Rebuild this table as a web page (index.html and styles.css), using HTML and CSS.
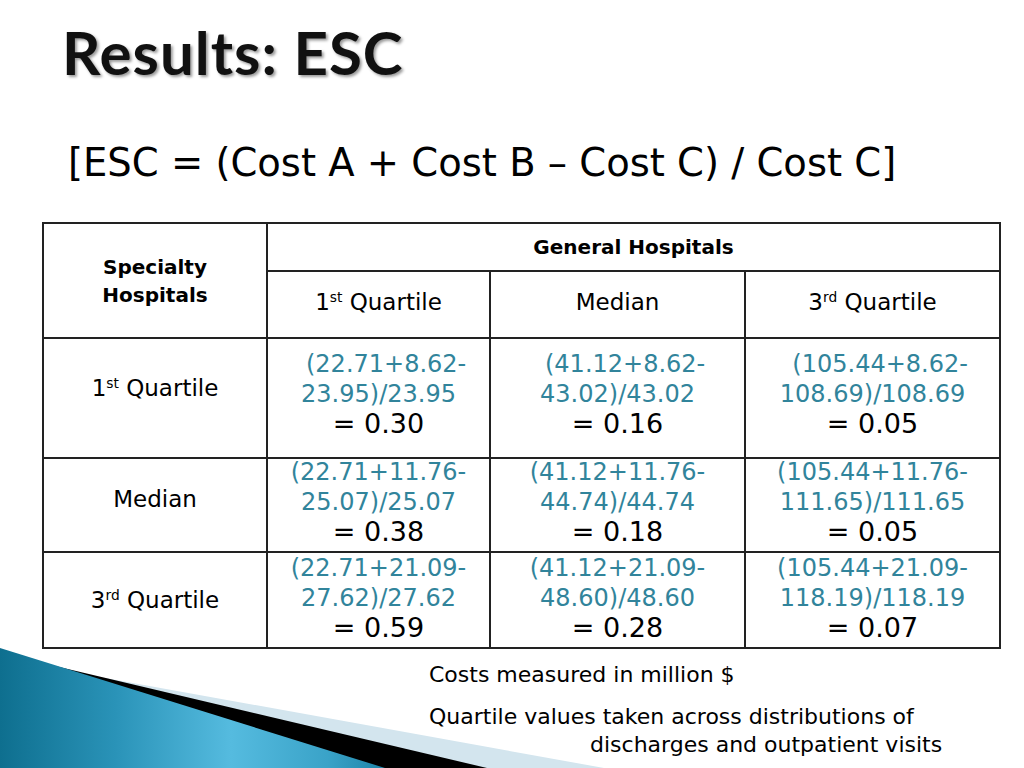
FILE: index.html
```html
<!DOCTYPE html>
<html>
<head>
<meta charset="utf-8">
<link rel="stylesheet" href="styles.css">
</head>
<body>
<div class="slide">
  <svg class="deco" width="620" height="130" viewBox="0 0 620 130">
    <defs>
      <linearGradient id="blue" x1="0" y1="0" x2="1" y2="0">
        <stop offset="0" stop-color="#0e6f8f"/>
        <stop offset="0.3" stop-color="#2a93b8"/>
        <stop offset="0.6" stop-color="#55bbdf"/>
        <stop offset="0.85" stop-color="#3aa3c8"/>
        <stop offset="1" stop-color="#1e84a8"/>
      </linearGradient>
    </defs>
    <polygon points="0,21 604,130 0,130" fill="#d3e5ee"/>
    <polygon points="0,15 487,130 0,130" fill="#000"/>
    <polygon points="0,10 385,130 0,130" fill="url(#blue)"/>
  </svg>
  <h1 class="title">Results: ESC</h1>
  <p class="formula">[ESC = (Cost A + Cost B – Cost C) / Cost C]</p>
  <table class="esc">
    <colgroup>
      <col class="w-spec">
      <col class="w-c1">
      <col class="w-c2">
      <col class="w-c3">
    </colgroup>
    <tr class="r-head1">
      <th class="c-spec" rowspan="2">Specialty<br>Hospitals</th>
      <th class="c-gen" colspan="3">General Hospitals</th>
    </tr>
    <tr class="r-head2">
      <td>1<sup>st</sup> Quartile</td>
      <td>Median</td>
      <td>3<sup>rd</sup> Quartile</td>
    </tr>
    <tr class="r1">
      <td class="lab">1<sup>st</sup> Quartile</td>
      <td><span class="calc">&nbsp;&nbsp;(22.71+8.62-<br>23.95)/23.95</span><span class="res">= 0.30</span></td>
      <td><span class="calc">&nbsp;&nbsp;(41.12+8.62-<br>43.02)/43.02</span><span class="res">= 0.16</span></td>
      <td><span class="calc">&nbsp;&nbsp;(105.44+8.62-<br>108.69)/108.69</span><span class="res">= 0.05</span></td>
    </tr>
    <tr class="r2">
      <td class="lab">Median</td>
      <td><span class="calc">(22.71+11.76-<br>25.07)/25.07</span><span class="res">= 0.38</span></td>
      <td><span class="calc">(41.12+11.76-<br>44.74)/44.74</span><span class="res">= 0.18</span></td>
      <td><span class="calc">(105.44+11.76-<br>111.65)/111.65</span><span class="res">= 0.05</span></td>
    </tr>
    <tr class="r3">
      <td class="lab">3<sup>rd</sup> Quartile</td>
      <td><span class="calc">(22.71+21.09-<br>27.62)/27.62</span><span class="res">= 0.59</span></td>
      <td><span class="calc">(41.12+21.09-<br>48.60)/48.60</span><span class="res">= 0.28</span></td>
      <td><span class="calc">(105.44+21.09-<br>118.19)/118.19</span><span class="res">= 0.07</span></td>
    </tr>
  </table>
  <div class="notes">
    <p class="note">Costs measured in million $</p>
    <p class="note">Quartile values taken across distributions of<br><span class="indent">discharges and outpatient visits</span></p>
  </div>
</div>
</body>
</html>
```

FILE: styles.css
```css
html, body {
  margin: 0;
  padding: 0;
  background: #fff;
}
.slide {
  position: relative;
  width: 1024px;
  height: 768px;
  overflow: hidden;
  background: #fff;
  font-family: "DejaVu Sans", "Liberation Sans", sans-serif;
  color: #000;
}
.deco {
  position: absolute;
  left: 0;
  bottom: 0;
  display: block;
}
.title {
  margin: 0;
  padding: 16px 0 0 62px;
  font-family: Lato, "Open Sans", sans-serif;
  font-weight: bold;
  font-size: 60px;
  letter-spacing: 1px;
  line-height: 72px;
  color: #111;
  text-shadow: 2px 2px 3px rgba(0, 0, 0, 0.4);
}
.formula {
  margin: 53px 0 0 68px;
  font-size: 38.5px;
  line-height: 44px;
  white-space: nowrap;
}
.esc {
  margin: 37px 0 0 42px;
  width: 957px;
  border-collapse: collapse;
  table-layout: fixed;
  font-size: 23px;
}
.w-spec { width: 224px; }
.w-c1 { width: 223px; }
.w-c2 { width: 255px; }
.w-c3 { width: 255px; }
.esc th, .esc td {
  border: 2px solid #222;
  padding: 0;
  text-align: center;
  vertical-align: middle;
}
.esc th {
  font-weight: bold;
  font-size: 20px;
}
.c-spec { line-height: 28px; padding-bottom: 6px; }
.c-gen { padding-bottom: 5px; }
.r-head1 { height: 48px; }
.r-head2 { height: 67px; }
.r-head2 td { padding-bottom: 6px; }
.r1 { height: 120px; }
.r2 { height: 94px; }
.r3 { height: 96px; }
sup {
  font-size: 60%;
  vertical-align: 0.55em;
  line-height: 0;
}
.calc {
  display: block;
  color: #31849b;
  font-size: 24px;
  line-height: 30px;
}
.res {
  display: block;
  font-size: 27px;
  line-height: 30px;
}
.r1 td { padding-bottom: 8px; }
.r1 .lab { padding-bottom: 20px; }
.r2 td, .r3 td { vertical-align: top; }
.r2 .calc { margin-top: -2px; }
.r2 .lab { vertical-align: middle; padding-bottom: 12px; }
.r3 .lab { vertical-align: middle; }
.notes {
  margin: 12px 0 0 429px;
  font-size: 22px;
}
.note {
  margin: 0 0 14px 0;
  line-height: 28px;
  white-space: nowrap;
}
.indent {
  padding-left: 161px;
}
```
